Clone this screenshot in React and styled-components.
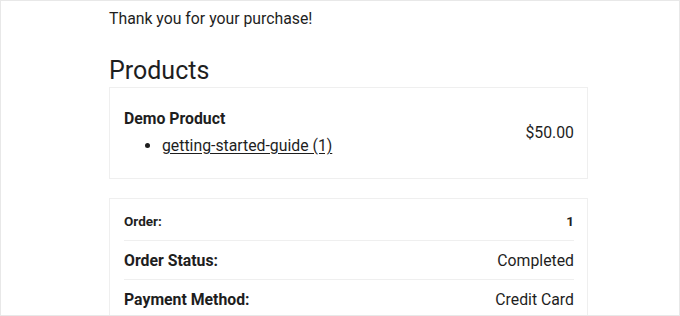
import React from 'react';
import styled, { createGlobalStyle } from 'styled-components';

const GlobalStyle = createGlobalStyle`
  html, body {
    margin: 0;
    padding: 0;
    background: #ffffff;
  }
  body {
    font-family: Roboto, "Liberation Sans", Arial, sans-serif;
    color: #1e1e1e;
  }
`;

const Page = styled.div`
  box-sizing: border-box;
  width: 680px;
  height: 316px;
  border: 1px solid #e8e8e8;
  overflow: hidden;
  padding: 0 0 0 108px;
`;

const Column = styled.div`
  width: 479px;
`;

const Thanks = styled.p`
  margin: 0;
  padding-top: 8px;
  font-size: 15.8px;
  line-height: 20px;
`;

const Heading = styled.h2`
  margin: 27px 0 0;
  font-size: 25px;
  font-weight: 400;
  line-height: 30px;
`;

const Card = styled.div`
  box-sizing: border-box;
  border: 1px solid #efefef;
  padding: ${(p) => p.$pad || '0 13px'};
  margin-top: ${(p) => p.$top || '0'};
`;

const ProductRow = styled.div`
  display: flex;
  align-items: center;
  justify-content: space-between;
  font-size: 15.8px;
`;

const ProductName = styled.div`
  font-weight: 700;
  line-height: 20px;
`;

const Files = styled.ul`
  margin: 7px 0 0;
  padding-left: 38px;
  line-height: 20px;
`;

const FileLink = styled.a`
  color: #1e1e1e;
  text-decoration: underline;
  text-underline-offset: 2px;
`;

const Price = styled.div`
  line-height: 20px;
`;

const InfoRow = styled.div`
  display: flex;
  justify-content: space-between;
  align-items: center;
  height: ${(p) => p.$h || '38px'};
  border-bottom: 1px solid #efefef;
  font-size: ${(p) => (p.$small ? '13.5px' : '15.8px')};
  &:last-child {
    border-bottom: none;
  }
`;

const Label = styled.span`
  font-weight: 700;
`;

const Value = styled.span`
  font-weight: ${(p) => (p.$bold ? 700 : 400)};
`;

export default function App() {
  return (
    <>
      <GlobalStyle />
      <Page>
        <Column>
          <Thanks>Thank you for your purchase!</Thanks>
          <Heading>Products</Heading>
          <Card $pad="21px 13px 22px 14px" $top="1px">
            <ProductRow>
              <div>
                <ProductName>Demo Product</ProductName>
                <Files>
                  <li><FileLink href="#">getting-started-guide (1)</FileLink></li>
                </Files>
              </div>
              <Price>$50.00</Price>
            </ProductRow>
          </Card>
          <Card $pad="2px 13px 0 14px" $top="19px">
            <InfoRow $small $h="39px">
              <Label>Order:</Label>
              <Value $bold>1</Value>
            </InfoRow>
            <InfoRow>
              <Label>Order Status:</Label>
              <Value>Completed</Value>
            </InfoRow>
            <InfoRow>
              <Label>Payment Method:</Label>
              <Value>Credit Card</Value>
            </InfoRow>
          </Card>
        </Column>
      </Page>
    </>
  );
}
